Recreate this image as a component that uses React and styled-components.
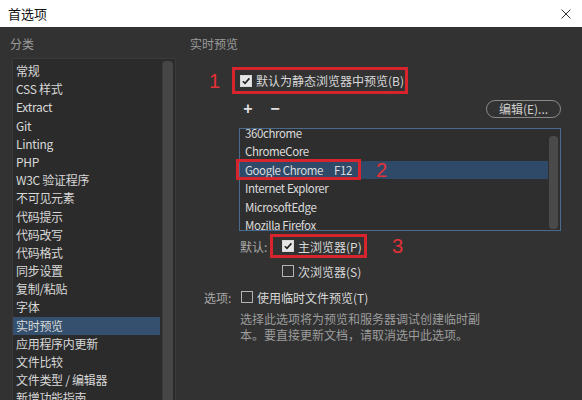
import React from "react";
import styled, { createGlobalStyle } from "styled-components";

const GlobalStyle = createGlobalStyle`
    html, body {
        margin: 0;
        padding: 0;
        background: #323232;
    }
    * { box-sizing: border-box; }
`;

const Window = styled.div`
    width: 582px;
    height: 400px;
    display: flex;
    flex-direction: column;
    overflow: hidden;
    font-family: "Noto Sans CJK SC", "Noto Sans", sans-serif;
    font-size: 12px;
    color: #d4d4d4;
`;

const TitleBar = styled.div`
    height: 27px;
    flex: none;
    background: #fff;
    display: flex;
    align-items: center;
    justify-content: space-between;
    padding: 0 11px 0 8px;
    color: #111;
    font-size: 13px;
`;

const Body = styled.div`
    flex: 1;
    display: flex;
    background: #323232;
    padding-top: 8px;
    min-height: 0;
`;

const Sidebar = styled.div`
    width: 190px;
    flex: none;
    display: flex;
    flex-direction: column;
    padding: 0 14px 0 10px;
`;

const Heading = styled.div`
    height: 18px;
    line-height: 18px;
    color: #9a9a9a;
`;

const CategoryPanel = styled.div`
    position: relative;
    margin: 5px 0 0 2px;
    flex: 1;
    background: #2b2b2b;
    border: 1px solid #3a3a3a;
    border-bottom: none;
    padding-top: 3px;
    overflow: hidden;
`;

const CategoryItem = styled.div`
    height: 18.2px;
    line-height: 18.2px;
    padding-left: 3px;
    margin-right: 15px;
    white-space: nowrap;
    letter-spacing: -0.3px;
    color: #d8d8d8;
    background: ${p => (p.$active ? "#34506e" : "transparent")};
`;

const SideScroll = styled.div`
    position: absolute;
    top: 2px;
    right: 2px;
    bottom: 0;
    width: 11px;
    background: #464646;
    border-left: 1px solid #3d3d3d;
    border-radius: 4px 4px 0 0;
`;

const Main = styled.div`
    flex: 1;
    display: flex;
    flex-direction: column;
    padding-right: 21px;
`;

const Row = styled.div`
    display: flex;
    align-items: center;
    padding-left: ${p => p.$indent || 0}px;
    margin-top: ${p => p.$top || 0}px;
    height: ${p => p.$h || 18}px;
`;

const Marker = styled.span`
    font-family: "Liberation Sans", sans-serif;
    font-size: 20px;
    color: #e3313a;
    line-height: 1;
    width: ${p => p.$w || 23}px;
    margin-left: ${p => p.$gap || 0}px;
    flex: none;
`;

const RedBox = styled.div`
    display: flex;
    align-items: center;
    border: 3px solid #d8242c;
    height: ${p => p.$h}px;
    width: ${p => p.$w}px;
    padding-left: ${p => p.$pad}px;
    flex: none;
`;

const Check = styled.span`
    width: 12px;
    height: 12px;
    flex: none;
    display: inline-flex;
    align-items: center;
    justify-content: center;
    border: 1px solid ${p => (p.$checked ? "#d8d8d8" : "#b4b4b4")};
    background: ${p => (p.$checked ? "#e6e6e6" : "transparent")};
    margin-right: 4px;
`;

const Text = styled.span`
    white-space: nowrap;
    color: #d8d8d8;
`;

const FieldLabel = styled.span`
    white-space: nowrap;
    color: #a8a8a8;
    width: ${p => p.$w}px;
    flex: none;
`;

const ToolButton = styled.span`
    width: 12px;
    display: inline-flex;
    justify-content: center;
    color: #e0e0e0;
    font-family: "Liberation Sans", sans-serif;
    font-weight: bold;
    font-size: 16px;
    margin-right: 15px;
    line-height: 1;
`;

const PillButton = styled.button`
    margin-left: auto;
    height: 18px;
    width: 75px;
    border: 1px solid #8a8a8a;
    border-radius: 9px;
    background: transparent;
    color: #cfcfcf;
    font: inherit;
    font-size: 12px;
    padding: 0;
    line-height: 16px;
`;

const ListWrap = styled.div`
    position: relative;
    margin: 8px 0 0 49px;
    height: 103px;
`;

const ListBox = styled.div`
    position: relative;
    height: 103px;
    border: 1px solid #4a6b8e;
    background: #2e2e2e;
    overflow: hidden;
`;

const ListInner = styled.div`
    margin-top: -5px;
`;

const BrowserItem = styled.div`
    height: 18.4px;
    line-height: 18.4px;
    padding-left: 5px;
    margin-right: 12px;
    white-space: nowrap;
    font-size: 11.5px;
    letter-spacing: -0.4px;
    color: #dcdcdc;
    background: ${p => (p.$active ? "#2f4a69" : "transparent")};
`;

const Shortcut = styled.span`
    margin-left: 11px;
`;

const ListScroll = styled.div`
    position: absolute;
    top: 7px;
    right: 2px;
    bottom: 1px;
    width: 9px;
    background: #4a4a4a;
    border-radius: 4px;
`;

const Callout = styled.div`
    position: absolute;
    left: -3px;
    top: 31px;
    width: 125px;
    height: 21px;
    border: 3px solid #d8242c;
`;

const CalloutNumber = styled(Marker)`
    position: absolute;
    left: 137px;
    top: 32px;
`;

const Description = styled.div`
    margin: 5px 0 0 50px;
    line-height: 16px;
    color: #9c9c9c;
`;

const CloseIcon = () => (
    <svg width="10" height="10" viewBox="0 0 10 10">
        <path d="M0.5 0.5 L9.5 9.5 M9.5 0.5 L0.5 9.5" stroke="#333" strokeWidth="1" />
    </svg>
);

const Tick = () => (
    <svg width="10" height="10" viewBox="0 0 10 10">
        <path d="M1.8 5.2 L4 7.4 L8.4 2.4" stroke="#222" strokeWidth="1.6" fill="none" />
    </svg>
);

const CheckBox = ({ checked }) => (
    <Check $checked={checked}>{checked && <Tick />}</Check>
);

const categories = [
    "常规", "CSS 样式", "Extract", "Git", "Linting", "PHP", "W3C 验证程序",
    "不可见元素", "代码提示", "代码改写", "代码格式", "同步设置", "复制/粘贴",
    "字体", "实时预览", "应用程序内更新", "文件比较", "文件类型 / 编辑器", "新增功能指南"
];

const browsers = [
    "360chrome", "ChromeCore", "Google Chrome", "Internet Explorer",
    "MicrosoftEdge", "Mozilla Firefox"
];

const App = () => {
    return (
        <Window>
            <GlobalStyle />
            <TitleBar>
                <span>首选项</span>
                <CloseIcon />
            </TitleBar>
            <Body>
                <Sidebar>
                    <Heading>分类</Heading>
                    <CategoryPanel>
                        {categories.map(c => (
                            <CategoryItem key={c} $active={c === "实时预览"}>{c}</CategoryItem>
                        ))}
                        <SideScroll />
                    </CategoryPanel>
                </Sidebar>

                <Main>
                    <Heading>实时预览</Heading>

                    <Row $indent={19} $top={14} $h={27}>
                        <Marker>1</Marker>
                        <RedBox $w={176} $h={27} $pad={5}>
                            <CheckBox checked />
                            <Text>默认为静态浏览器中预览(B)</Text>
                        </RedBox>
                    </Row>

                    <Row $indent={52} $top={4} $h={22}>
                        <ToolButton>+</ToolButton>
                        <ToolButton>−</ToolButton>
                        <PillButton>编辑(E)...</PillButton>
                    </Row>

                    <ListWrap>
                        <ListBox>
                            <ListInner>
                                {browsers.map(b => (
                                    <BrowserItem key={b} $active={b === "Google Chrome"}>
                                        {b}
                                        {b === "Google Chrome" && <Shortcut>F12</Shortcut>}
                                    </BrowserItem>
                                ))}
                            </ListInner>
                            <ListScroll />
                        </ListBox>
                        <Callout />
                        <CalloutNumber>2</CalloutNumber>
                    </ListWrap>

                    <Row $indent={50} $top={3} $h={24}>
                        <FieldLabel $w={30}>默认:</FieldLabel>
                        <RedBox $w={97} $h={24} $pad={9}>
                            <CheckBox checked />
                            <Text>主浏览器(P)</Text>
                        </RedBox>
                        <Marker $gap={25}>3</Marker>
                    </Row>

                    <Row $indent={92} $top={4} $h={18}>
                        <CheckBox />
                        <Text>次浏览器(S)</Text>
                    </Row>

                    <Row $indent={14} $top={8} $h={18}>
                        <FieldLabel $w={37}>选项:</FieldLabel>
                        <CheckBox />
                        <Text>使用临时文件预览(T)</Text>
                    </Row>

                    <Description>
                        选择此选项将为预览和服务器调试创建临时副<br />
                        本。要直接更新文档，请取消选中此选项。
                    </Description>
                </Main>
            </Body>
        </Window>
    );
};

export default App;
